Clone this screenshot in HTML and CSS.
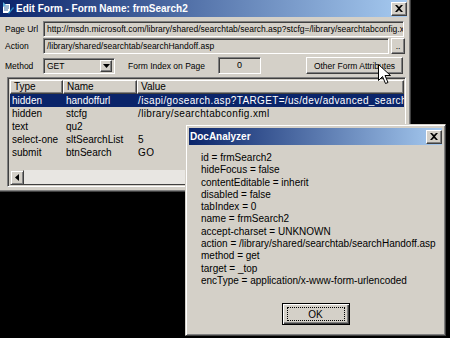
FILE: index.html
```html
<!DOCTYPE html>
<html>
<head>
<meta charset="utf-8">
<link rel="stylesheet" href="styles.css">
</head>
<body>
<div class="desktop">
  <div class="window edit">
    <div class="titlebar">
      <svg class="app-icon" width="12" height="13" viewBox="0 0 12 13">
        <rect x="0.5" y="1.5" width="8" height="10" fill="#fff" stroke="#0a246a" stroke-width="1"/>
        <path d="M2 4h5M2 6h5M2 8h4" stroke="#3a6ea5" stroke-width="1"/>
        <path d="M6 11l5-6 1 1-5 6z" fill="#2a8ac0"/>
        <path d="M1 0l3 3-3 2z" fill="#5ab0e0"/>
      </svg>
      <span class="title">Edit Form - Form Name: frmSearch2</span>
      <div class="tb-close"><svg width="8" height="7" viewBox="0 0 8 7"><path d="M0 0h2l2 2 2-2h2L5 3.5 8 7H6L4 5 2 7H0l3-3.5z" fill="#000"/></svg></div>
    </div>
    <div class="edit-body">
      <div class="row r1">
        <span class="lbl">Page Url</span>
        <div class="field url">http://msdn.microsoft.com/library/shared/searchtab/search.asp?stcfg=/library/searchtabconfig.x</div>
      </div>
      <div class="row r2">
        <span class="lbl">Action</span>
        <div class="field action">/library/shared/searchtab/searchHandoff.asp</div>
        <div class="btn dots">..</div>
      </div>
      <div class="row r3">
        <span class="lbl">Method</span>
        <div class="field select"><span class="sel-val">GET</span><span class="drop"><svg width="7" height="4" viewBox="0 0 7 4"><path d="M0 0h7L3.5 4z" fill="#000"/></svg></span></div>
        <span class="idx-lbl">Form Index on Page</span>
        <div class="field idx">0</div>
        <div class="btn attrs">Other Form Attributes</div>
      </div>
      <div class="listview">
        <div class="lv-head">
          <div class="hcell c-type">Type</div>
          <div class="hcell c-name">Name</div>
          <div class="hcell c-val">Value</div>
        </div>
        <div class="lv-rows">
          <div class="lv-row sel"><span class="c-type">hidden</span><span class="c-name">handoffurl</span><span class="c-val">/isapi/gosearch.asp?TARGET=/us/dev/advanced_search</span></div>
          <div class="lv-row"><span class="c-type">hidden</span><span class="c-name">stcfg</span><span class="c-val">/library/searchtabconfig.xml</span></div>
          <div class="lv-row"><span class="c-type">text</span><span class="c-name">qu2</span><span class="c-val"></span></div>
          <div class="lv-row"><span class="c-type">select-one</span><span class="c-name">sltSearchList</span><span class="c-val">5</span></div>
          <div class="lv-row"><span class="c-type">submit</span><span class="c-name">btnSearch</span><span class="c-val">GO</span></div>
        </div>
        <div class="hscroll">
          <div class="sb-btn"><svg width="4" height="7" viewBox="0 0 4 7"><path d="M4 0v7L0 3.5z" fill="#000"/></svg></div>
          <div class="sb-track"></div>
        </div>
      </div>
    </div>
  </div>

  <div class="window doc">
    <div class="titlebar">
      <span class="title">DocAnalyzer</span>
      <div class="tb-close"><svg width="8" height="7" viewBox="0 0 8 7"><path d="M0 0h2l2 2 2-2h2L5 3.5 8 7H6L4 5 2 7H0l3-3.5z" fill="#000"/></svg></div>
    </div>
    <div class="doc-body">
      <div class="props">
        <div>id = frmSearch2</div>
        <div>hideFocus = false</div>
        <div>contentEditable = inherit</div>
        <div>disabled = false</div>
        <div>tabIndex = 0</div>
        <div>name = frmSearch2</div>
        <div>accept-charset = UNKNOWN</div>
        <div>action = /library/shared/searchtab/searchHandoff.asp</div>
        <div>method = get</div>
        <div>target = _top</div>
        <div>encType = application/x-www-form-urlencoded</div>
      </div>
      <div class="ok-wrap"><div class="btn ok"><span class="focus">OK</span></div></div>
    </div>
  </div>

  <svg class="cursor" width="13" height="21" viewBox="0 0 13 21">
    <path d="M0.5 0.5v16l4-4 3 7 2.5-1-3-7h5.5z" fill="#fff" stroke="#000" stroke-width="1"/>
  </svg>
</div>
</body>
</html>
```

FILE: styles.css
```css
* { box-sizing: border-box; }
html, body { margin: 0; padding: 0; }
body {
  background: #000;
  width: 450px;
  height: 338px;
  overflow: hidden;
  font-family: "Liberation Sans", Arial, sans-serif;
  font-size: 10px;
  color: #000;
}
.desktop { position: relative; width: 450px; height: 338px; overflow: hidden; }

.window {
  position: absolute;
  background: #d4d0c8;
  border: 1px solid;
  border-color: #d4d0c8 #404040 #404040 #d4d0c8;
  box-shadow: inset 1px 1px #fff, inset -1px -1px #808080;
  padding: 3px;
  display: flex;
  flex-direction: column;
}
.edit { left: -4px; top: -4px; width: 415px; height: 196px; }
.doc { left: 185px; top: 124px; width: 261px; height: 212px; }

.titlebar {
  height: 17px;
  flex: none;
  display: flex;
  align-items: center;
  background: linear-gradient(to right, #0a246a, #a6caf0);
  color: #fff;
  font-weight: bold;
  font-size: 10px;
  padding: 0 0 0 2px;
}
.doc .titlebar { padding-left: 1px; }
.app-icon { margin-right: 2px; flex: none; }
.title { flex: 1; white-space: nowrap; }
.tb-close {
  width: 16px; height: 14px;
  background: #d4d0c8;
  border: 1px solid;
  border-color: #fff #404040 #404040 #fff;
  box-shadow: inset -1px -1px #808080;
  display: flex; align-items: center; justify-content: center;
  padding-right: 1px;
}

.edit-body { display: flex; flex-direction: column; flex: 1; min-height: 0; }
.row { display: flex; align-items: center; font-size: 8.5px; }
.r1 { margin-top: 4px; height: 16px; }
.r2 { margin-top: 1px; height: 16px; }
.r3 { margin-top: 3px; height: 17px; }
.lbl { width: 43px; padding-left: 5px; flex: none; white-space: nowrap; }

.field {
  height: 16px;
  background: #d4d0c8;
  border: 1px solid;
  border-color: #808080 #fff #fff #808080;
  box-shadow: inset 1px 1px #404040, inset -1px -1px #d4d0c8;
  padding: 0 3px;
  white-space: nowrap;
  overflow: hidden;
  line-height: 14px;
  flex: none;
}
.url { width: 361px; }
.action { width: 346px; }
.btn {
  background: #d4d0c8;
  border: 1px solid;
  border-color: #fff #404040 #404040 #fff;
  box-shadow: inset -1px -1px #808080, inset 1px 1px #d4d0c8;
  display: flex; align-items: center; justify-content: center;
  white-space: nowrap;
  flex: none;
}
.dots { width: 14px; height: 16px; margin-left: 2px; line-height: 10px; padding-bottom: 2px; align-items: flex-end; }
.select { width: 72px; display: flex; padding: 0 2px 0 3px; align-items: center; }
.sel-val { flex: 1; }
.drop {
  width: 12px; height: 12px;
  background: #d4d0c8;
  border: 1px solid;
  border-color: #fff #404040 #404040 #fff;
  box-shadow: inset -1px -1px #808080;
  display: flex; align-items: center; justify-content: center;
}
.idx-lbl { margin-left: 13px; width: 90px; flex: none; white-space: nowrap; }
.idx { width: 43px; height: 17px; text-align: center; font-size: 9px; }
.attrs { width: 97px; height: 17px; margin-left: auto; margin-right: 4px; }

.listview {
  margin: 3px 1px 0 7px;
  height: 110px;
  border: 1px solid;
  border-color: #808080 #fff #fff #808080;
  box-shadow: inset 1px 1px #404040, inset -1px -1px #d4d0c8;
  padding: 2px 1px 1px 2px;
  display: flex;
  flex-direction: column;
  overflow: hidden;
}
.lv-head { display: flex; height: 14px; flex: none; }
.hcell {
  border: 1px solid;
  border-color: #fff #404040 #404040 #fff;
  box-shadow: inset -1px -1px #808080;
  padding-left: 3px;
  line-height: 12px;
  white-space: nowrap;
}
.lv-head .c-type { width: 53px; }
.lv-head .c-name { width: 74px; }
.lv-head .c-val { flex: 1; }
.lv-rows { flex: 1; display: flex; flex-direction: column; }
.lv-row { display: flex; height: 13px; line-height: 13px; white-space: nowrap; overflow: hidden; }
.lv-row span { flex: none; overflow: hidden; }
.lv-row .c-type { width: 53px; padding-left: 2px; }
.lv-row .c-name { width: 74px; padding-left: 3px; }
.lv-row .c-val { padding-left: 1px; letter-spacing: 0.35px; }
.lv-row.sel { background: #0a246a; color: #fff; }

.hscroll { display: flex; height: 15px; flex: none; }
.sb-btn {
  width: 14px; height: 15px;
  background: #d4d0c8;
  border: 1px solid;
  border-color: #d4d0c8 #404040 #404040 #d4d0c8;
  box-shadow: inset 1px 1px #fff, inset -1px -1px #808080;
  display: flex; align-items: center; justify-content: center;
}
.sb-track {
  flex: 1;
  background: #e8e6e2;
  border-bottom: 1px solid #404040;
}

.doc-body { flex: 1; display: flex; flex-direction: column; padding: 7px 0 0 12px; }
.props { line-height: 12.3px; white-space: nowrap; }
.ok-wrap { display: flex; justify-content: center; margin-top: 16px; padding-right: 12px; }
.ok {
  width: 68px; height: 22px;
  border: 1px solid #000;
  box-shadow: inset 1px 1px #fff, inset -1px -1px #404040, inset -2px -2px #808080;
}
.focus {
  border: 1px dotted #000;
  width: 58px; height: 14px;
  display: flex; align-items: center; justify-content: center;
}

.cursor { position: absolute; left: 378px; top: 64px; }
```
